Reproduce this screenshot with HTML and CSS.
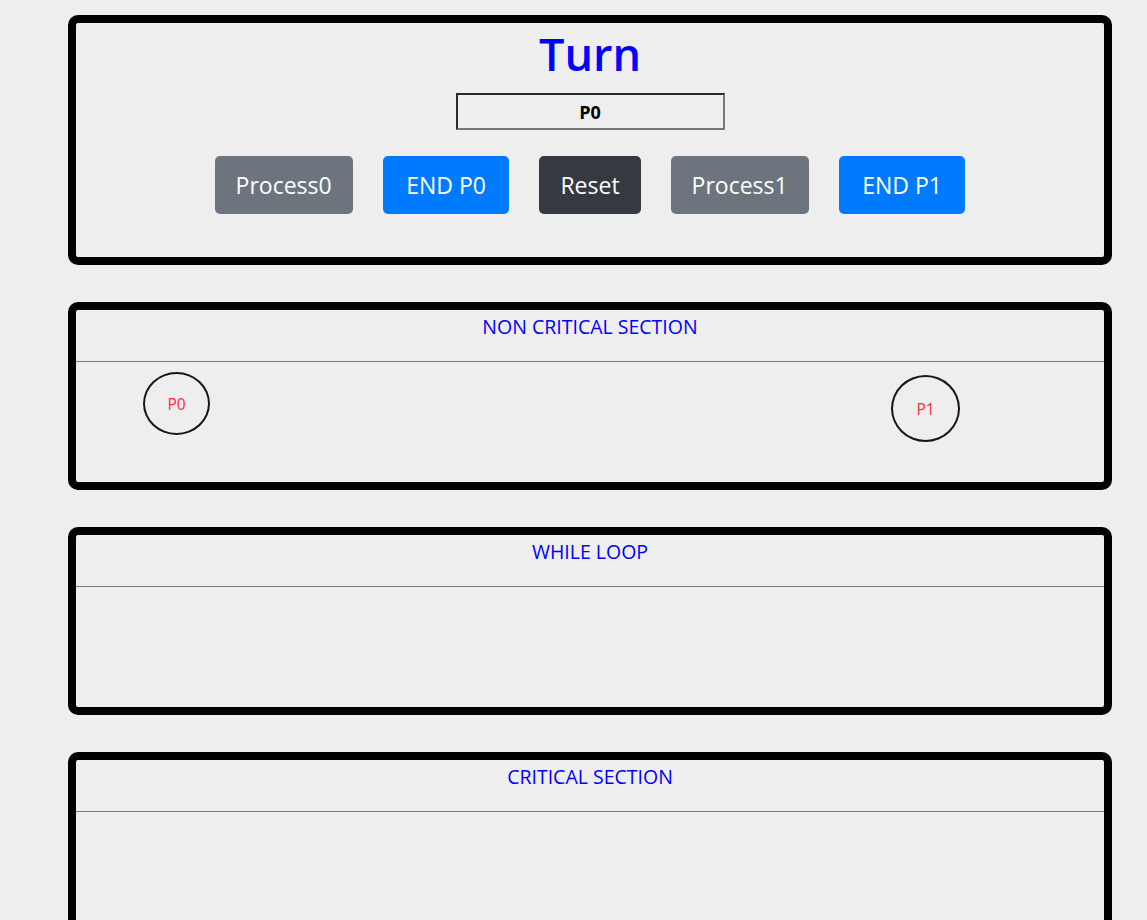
FILE: index.html
```html
<!DOCTYPE html>
<html lang="en">
<head>
<meta charset="utf-8">
<title>Turn</title>
<link rel="stylesheet" href="styles.css">
</head>
<body>
<div class="page">
  <section class="panel turn-panel">
    <h1 class="turn-title">Turn</h1>
    <input class="turn-input" type="text" value="P0" readonly>
    <div class="btn-row">
      <button class="btn btn-secondary">Process0</button>
      <button class="btn btn-primary">END P0</button>
      <button class="btn btn-dark">Reset</button>
      <button class="btn btn-secondary">Process1</button>
      <button class="btn btn-primary">END P1</button>
    </div>
  </section>

  <section class="panel stage">
    <div class="stage-head">NON CRITICAL SECTION</div>
    <div class="stage-body">
      <div class="proc proc-p0">P0</div>
      <div class="proc proc-p1">P1</div>
    </div>
  </section>

  <section class="panel stage">
    <div class="stage-head">WHILE LOOP</div>
    <div class="stage-body"></div>
  </section>

  <section class="panel stage">
    <div class="stage-head">CRITICAL SECTION</div>
    <div class="stage-body"></div>
  </section>
</div>
</body>
</html>
```

FILE: styles.css
```css
html, body {
  margin: 0;
  padding: 0;
  background: #eeeeee;
}

body {
  font-family: "Open Sans", "Noto Sans", "DejaVu Sans", sans-serif;
  color: #000;
}

.page {
  width: 1044px;
  margin-left: 68px;
  padding-top: 15px;
  display: flex;
  flex-direction: column;
  gap: 37px;
}

.panel {
  border: 8px solid #000;
  border-radius: 10px;
  box-sizing: border-box;
}

.turn-panel {
  height: 250px;
  display: flex;
  flex-direction: column;
  align-items: center;
  padding-top: 1px;
}

.turn-title {
  margin: 0;
  font-size: 45px;
  font-weight: 600;
  line-height: 60px;
  height: 60px;
  color: #0000ff;
}

.turn-input {
  margin-top: 9px;
  width: 269px;
  height: 37px;
  box-sizing: border-box;
  border: 2px solid;
  border-color: #2a2a2a #767676 #767676 #2a2a2a;
  background: transparent;
  text-align: center;
  font-family: "Open Sans", "Noto Sans", sans-serif;
  font-weight: 700;
  font-size: 18px;
  color: #000;
  padding: 0;
  outline: none;
}

.btn-row {
  margin-top: 26px;
  display: flex;
  gap: 30px;
  justify-content: center;
}

.btn {
  height: 58px;
  padding: 0 21px;
  border: none;
  border-radius: 5px;
  font-family: "Open Sans", "Noto Sans", sans-serif;
  font-size: 23px;
  color: #fff;
  cursor: pointer;
}

.btn-secondary { background: #6c757d; }
.btn-primary { background: #007bff; padding: 0 23.5px; }
.btn-dark { background: #343a40; }

.stage {
  height: 188px;
  display: flex;
  flex-direction: column;
}

.stage-head {
  height: 52px;
  flex: none;
  border-bottom: 1px solid #777;
  text-align: center;
  color: #0000ff;
  font-size: 19.5px;
  line-height: 22px;
  padding-top: 6px;
  box-sizing: border-box;
}

.stage-body {
  position: relative;
  flex: 1;
}

.proc {
  position: absolute;
  box-sizing: border-box;
  border: 2px solid #161616;
  border-radius: 50%;
  display: flex;
  align-items: center;
  justify-content: center;
  color: #ff3030;
  font-size: 15.5px;
}

.proc-p0 {
  left: 67px;
  top: 10px;
  width: 67px;
  height: 63px;
}

.proc-p1 {
  left: 815px;
  top: 13px;
  width: 69px;
  height: 67px;
}
```
